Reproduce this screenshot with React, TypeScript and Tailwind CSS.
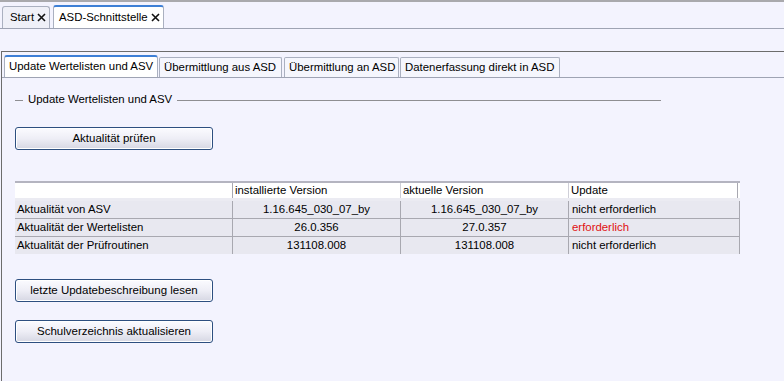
import React from 'react'

const font = { fontFamily: '"Liberation Sans", Arial, sans-serif' }

function CloseX() {
  return (
    <svg width="9" height="9" viewBox="0 0 9 9" className="ml-[3px]" aria-hidden="true">
      <path d="M1 1 L8 8 M8 1 L1 8" stroke="#111" strokeWidth="1.6" />
    </svg>
  )
}

function WinButton({ label }: { label: string }) {
  return (
    <button className="w-[198px] h-[23px] rounded-[3px] border border-[#2d4f80] bg-gradient-to-b from-[#fbfbff] via-[#eeeef6] to-[#d6d7e3] text-[11.5px] text-black flex items-center justify-center shadow-[inset_0_0_0_1px_#ffffff]">
      {label}
    </button>
  )
}

const rows = [
  { name: 'Aktualität von ASV', inst: '1.16.645_030_07_by', akt: '1.16.645_030_07_by', upd: 'nicht erforderlich', red: false },
  { name: 'Aktualität der Wertelisten', inst: '26.0.356', akt: '27.0.357', upd: 'erforderlich', red: true },
  { name: 'Aktualität der Prüfroutinen', inst: '131108.008', akt: '131108.008', upd: 'nicht erforderlich', red: false },
]

export default function App() {
  return (
    <div className="w-[784px] h-[381px] bg-[#f3f3fe] overflow-hidden flex flex-col text-[11.4px] text-black" style={font}>
      {/* Top tab strip */}
      <div className="border-t-2 border-[#a9a9ad]" />
      <div className="h-[27px] flex items-end gap-[3px] pl-[2px] border-b border-[#9ea3b3]">
        <div className="h-[22px] w-[48px] pl-[7px] flex items-center border border-b-0 border-[#aab0c0] rounded-t-[3px] bg-[#eff0f8]">
          Start
          <CloseX />
        </div>
        <div className="h-[23px] w-[111px] pl-[5px] flex items-center border border-b-0 border-[#aab0c0] border-t-2 border-t-[#3d7fd6] rounded-t-[3px] bg-white">
          ASD-Schnittstelle
          <CloseX />
        </div>
      </div>

      <div className="h-[22px]" />

      {/* Panel */}
      <div className="flex-1 border-t border-l border-[#6c6c6c] ml-[1px] flex flex-col">
        <div className="h-[26px] flex items-end gap-[1px] pl-[2px] border-b border-[#9ea3b3]">
          <div className="h-[22px] w-[154px] pl-[4px] flex items-center border border-b-0 border-[#aab0c0] border-t-2 border-t-[#3d7fd6] rounded-t-[3px] bg-white">
            Update Wertelisten und ASV
          </div>
          <div className="h-[20px] w-[123px] pl-[4px] flex items-center border border-b-0 border-[#aab0c0] rounded-t-[2px] bg-[#f5f6fd]">
            Übermittlung aus ASD
          </div>
          <div className="h-[20px] w-[115px] pl-[4px] ml-[1px] flex items-center border border-b-0 border-[#aab0c0] rounded-t-[2px] bg-[#f5f6fd]">
            Übermittlung an ASD
          </div>
          <div className="h-[20px] w-[160px] pl-[4px] flex items-center border border-b-0 border-[#aab0c0] rounded-t-[2px] bg-[#f5f6fd]">
            Datenerfassung direkt in ASD
          </div>
        </div>

        <div className="pl-[13px] pt-[15px] flex flex-col">
          {/* Group title */}
          <div className="flex items-center w-[646px] h-[14px]">
            <div className="w-[8px] border-t border-[#8e8e92]" />
            <span className="px-[5px]">Update Wertelisten und ASV</span>
            <div className="flex-1 border-t border-[#8e8e92]" />
          </div>

          <div className="mt-[20px]">
            <WinButton label="Aktualität prüfen" />
          </div>

          {/* Table */}
          <div className="mt-[31px] w-[725px] border-t-2 border-[#b4b4c0] bg-white">
            <div className="grid grid-cols-[217px_168px_168px_171px] h-[18px] border-b-[3px] border-[#ebebf2]">
              <div />
              <div className="border-l border-[#a8a8b0] pl-[2px] leading-[15px]">installierte Version</div>
              <div className="border-l border-[#cfcfd8] pl-[2px] leading-[15px]">aktuelle Version</div>
              <div className="border-l border-[#cfcfd8] pl-[2px] leading-[15px] border-r border-r-[#a8a8b0] mr-[1px]">Update</div>
            </div>
            {rows.map((r) => (
              <div key={r.name} className="grid grid-cols-[217px_168px_168px_171px] h-[18px] bg-[#e8e8f0] border-b border-[#a8a8b0] last:border-b-0 last:h-[17px] border-r border-r-[#a8a8b0] leading-[17px]">
                <div className="pl-[2px]">{r.name}</div>
                <div className="border-l border-[#a8a8b0] text-center">{r.inst}</div>
                <div className="border-l border-[#a8a8b0] text-center">{r.akt}</div>
                <div className={`border-l border-[#a8a8b0] pl-[3px] ${r.red ? 'text-[#e01010]' : ''}`}>{r.upd}</div>
              </div>
            ))}
          </div>

          <div className="mt-[25px] flex flex-col gap-[18px]">
            <WinButton label="letzte Updatebeschreibung lesen" />
            <WinButton label="Schulverzeichnis aktualisieren" />
          </div>
        </div>
      </div>
    </div>
  )
}
